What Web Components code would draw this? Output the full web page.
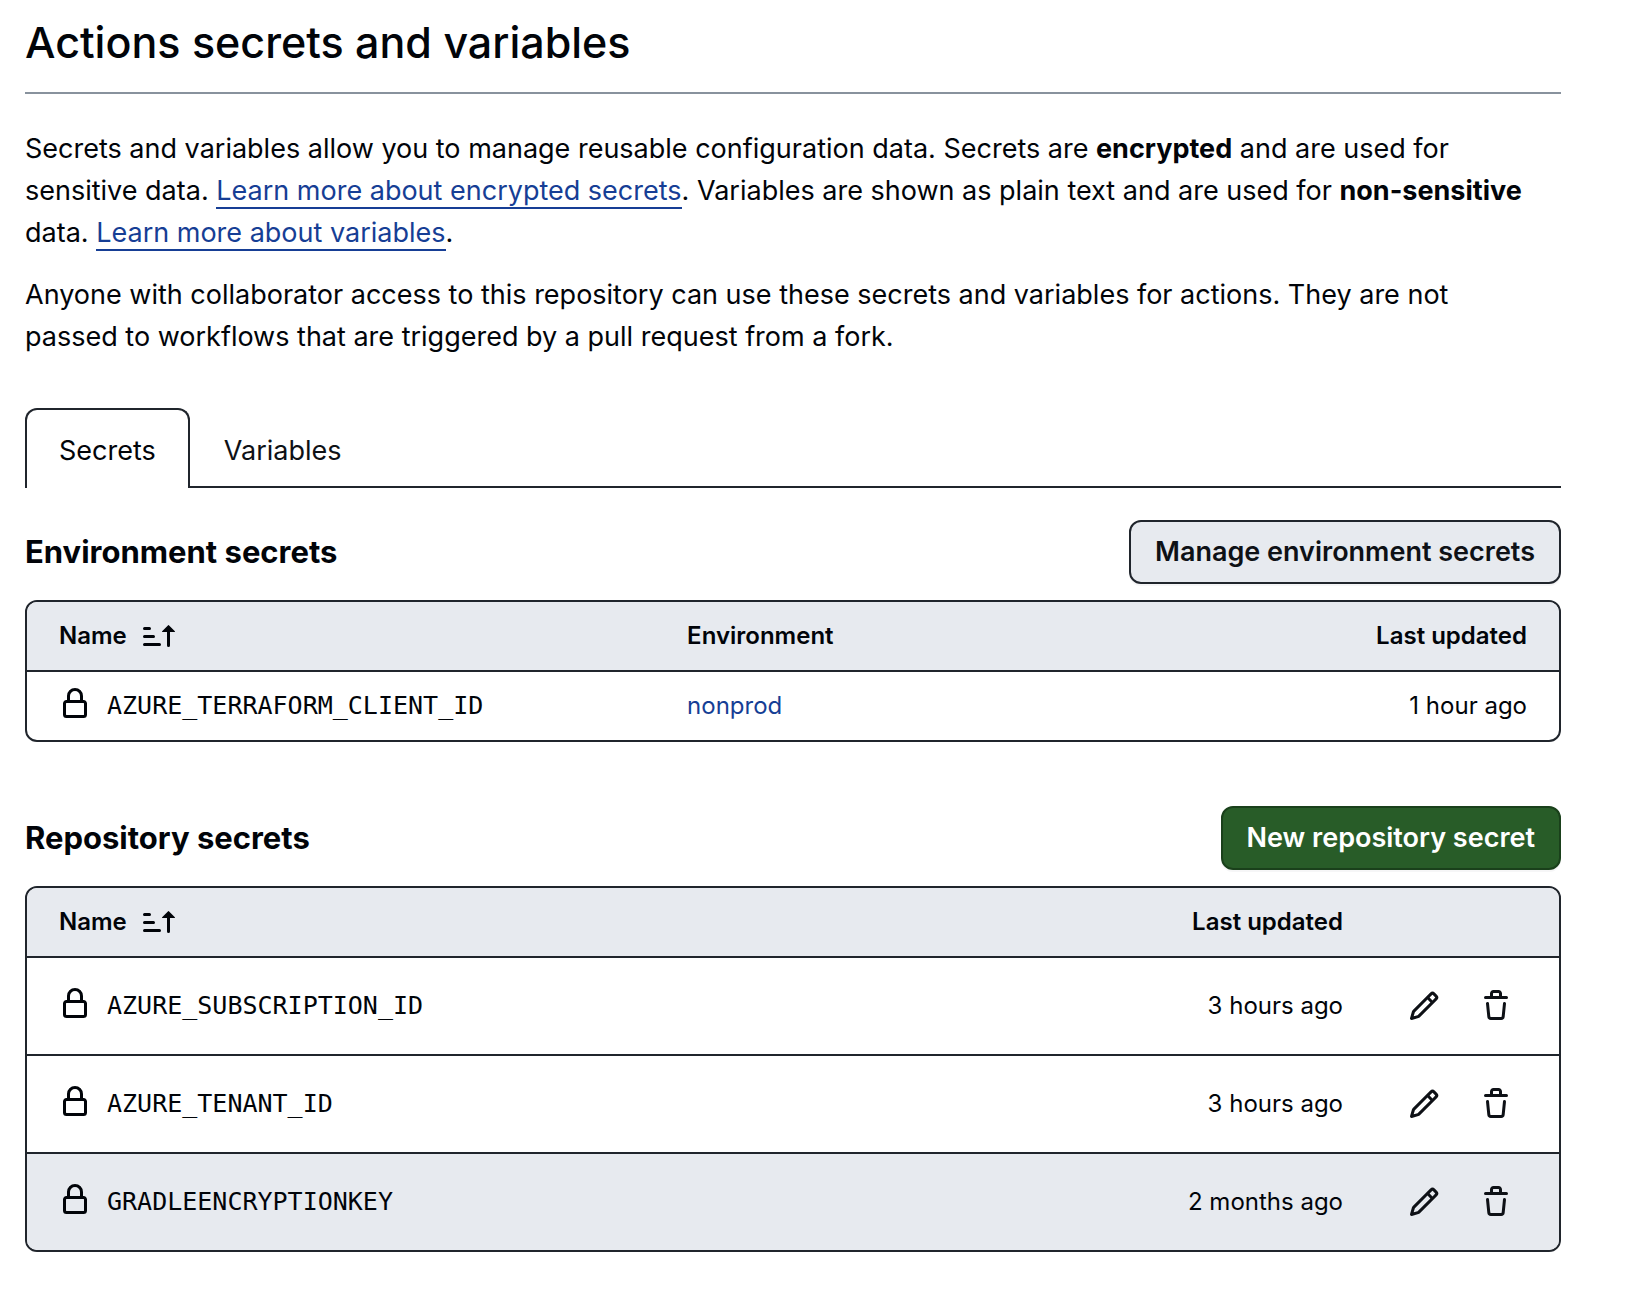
<!DOCTYPE html>
<html lang="en">
<head>
<meta charset="utf-8">
<title>Actions secrets and variables</title>
<style>
  :root {
    --fg: #010409;
    --fg-control: #0e1116;
    --line: #20252c;
    --line-muted: #88929d;
    --subtle: #e7eaef;
    --link: #163e95;
    --green: #285c28;
    --green-line: #1a401b;
    --radius: 12px;
    --mono: "DejaVu Sans Mono", "Liberation Mono", monospace;
  }
  body { margin: 0; background: #fff; color: var(--fg); font: 27px/42px Inter, "Liberation Sans", sans-serif; }
  strong { font-weight: 700; }
</style>
</head>
<body>
<settings-page>
  <page-header>Actions secrets and variables</page-header>
  <page-intro>
    <p>Secrets and variables allow you to manage reusable configuration data. Secrets are <strong>encrypted</strong> and are used for sensitive data. <text-link href="#encrypted" underline>Learn more about encrypted secrets</text-link>. Variables are shown as plain text and are used for <strong>non-sensitive</strong> data. <text-link href="#variables" underline>Learn more about variables</text-link>.</p>
    <p>Anyone with collaborator access to this repository can use these secrets and variables for actions. They are not passed to workflows that are triggered by a pull request from a fork.</p>
  </page-intro>
  <tab-nav></tab-nav>
  <secrets-section heading="Environment secrets" action="Manage environment secrets">
    <environment-table></environment-table>
  </secrets-section>
  <secrets-section heading="Repository secrets" action="New repository secret" variant="primary">
    <repository-table></repository-table>
  </secrets-section>
</settings-page>

<script>
const ICONS = {
  lock: '<path d="M4 4a4 4 0 0 1 8 0v2h.25c.966 0 1.75.784 1.75 1.75v5.5A1.75 1.75 0 0 1 12.25 15h-8.5A1.75 1.75 0 0 1 2 13.25v-5.5C2 6.784 2.784 6 3.75 6H4Zm8.25 3.5h-8.5a.25.25 0 0 0-.25.25v5.5c0 .138.112.25.25.25h8.5a.25.25 0 0 0 .25-.25v-5.5a.25.25 0 0 0-.25-.25ZM10.5 6V4a2.5 2.5 0 1 0-5 0v2Z"/>',
  sort: '<path d="m12.927 2.573 3 3A.25.25 0 0 1 15.75 6H13.5v6.75a.75.75 0 0 1-1.5 0V6H9.75a.25.25 0 0 1-.177-.427l3-3a.25.25 0 0 1 .354 0ZM0 12.25a.75.75 0 0 1 .75-.75h7.5a.75.75 0 0 1 0 1.5H.75a.75.75 0 0 1-.75-.75Zm0-4a.75.75 0 0 1 .75-.75h4.5a.75.75 0 0 1 0 1.5H.75A.75.75 0 0 1 0 8.25Zm0-4a.75.75 0 0 1 .75-.75h2.5a.75.75 0 0 1 0 1.5H.75A.75.75 0 0 1 0 4.25Z"/>',
  pencil: '<path d="M11.013 1.427a1.75 1.75 0 0 1 2.474 0l1.086 1.086a1.75 1.75 0 0 1 0 2.474l-8.61 8.61c-.21.21-.47.364-.756.445l-3.251.93a.75.75 0 0 1-.927-.928l.929-3.25c.081-.286.235-.547.445-.758l8.61-8.61Zm.176 4.823L9.75 4.81l-6.286 6.287a.253.253 0 0 0-.064.108l-.558 1.953 1.953-.558a.253.253 0 0 0 .108-.064Zm1.238-3.763a.25.25 0 0 0-.354 0L10.811 3.75l1.439 1.44 1.263-1.263a.25.25 0 0 0 0-.354Z"/>',
  trash: '<path d="M11 1.75V3h2.25a.75.75 0 0 1 0 1.5H2.75a.75.75 0 0 1 0-1.5H5V1.75C5 .784 5.784 0 6.75 0h2.5C10.216 0 11 .784 11 1.75ZM4.496 6.675l.66 6.6a.25.25 0 0 0 .249.225h5.19a.25.25 0 0 0 .249-.225l.66-6.6a.75.75 0 0 1 1.492.149l-.66 6.6A1.748 1.748 0 0 1 10.595 15h-5.19a1.75 1.75 0 0 1-1.741-1.575l-.66-6.6a.75.75 0 1 1 1.492-.15ZM6.5 1.75V3h3V1.75a.25.25 0 0 0-.25-.25h-2.5a.25.25 0 0 0-.25.25Z"/>'
};

function define(name, render) {
  customElements.define(name, class extends HTMLElement {
    constructor() {
      super();
      this.attachShadow({ mode: "open" });
    }
    connectedCallback() {
      this.shadowRoot.innerHTML = render(this);
    }
  });
}

define("oct-icon", el => `
  <style>
    :host { display: inline-flex; }
    svg { display: block; width: 32px; height: 32px; fill: currentColor; }
  </style>
  <svg viewBox="0 0 16 16" aria-hidden="true">${ICONS[el.getAttribute("name")]}</svg>`);

define("settings-page", () => `
  <style>:host { display: block; padding: 14px 77px 54px 25px; }</style>
  <slot></slot>`);

define("page-header", () => `
  <style>
    :host { display: block; border-bottom: 2px solid var(--line-muted); padding-bottom: 22px; }
    h1 { margin: 0; font-size: 43px; line-height: 56px; font-weight: 500; }
  </style>
  <h1><slot></slot></h1>`);

define("page-intro", () => `
  <style>
    :host { display: block; padding: 34px 24px 0 0; }
    ::slotted(p) { margin: 0 0 20px; }
  </style>
  <slot></slot>`);

define("text-link", el => `
  <style>
    :host { display: inline; }
    a { color: var(--link); text-decoration: none; }
    :host([underline]) a { border-bottom: 2px solid currentColor; }
  </style>
  <a href="${el.getAttribute("href")}"><slot></slot></a>`);

define("tab-nav", () => `
  <style>
    :host { display: block; margin-top: 50px; }
    nav { display: flex; border-bottom: 2px solid var(--line); }
    a { padding: 20px 32px 14px; border: 2px solid transparent; border-bottom: 0; color: var(--fg-control); text-decoration: none; }
    a[aria-current] { margin-bottom: -2px; padding-bottom: 16px; background: #fff; color: var(--fg); border-color: var(--line); border-radius: var(--radius) var(--radius) 0 0; }
  </style>
  <nav aria-label="Secrets and variables">
    <a href="#secrets" aria-current="page">Secrets</a>
    <a href="#variables">Variables</a>
  </nav>`);

define("action-button", () => `
  <style>
    :host { display: block; }
    button { display: block; height: 64px; padding: 0 24px; border: 2px solid var(--line); border-radius: var(--radius); background: var(--subtle); color: var(--fg-control); font: inherit; font-weight: 600; box-shadow: 0 2px 0 #1f23280a; }
    :host([variant="primary"]) button { background: var(--green); border-color: var(--green-line); color: #fff; }
  </style>
  <button type="button"><slot></slot></button>`);

define("secrets-section", el => `
  <style>
    :host { display: block; padding-top: 32px; }
    :host([variant]) { padding-top: 64px; }
    header { display: flex; align-items: center; justify-content: space-between; margin-bottom: 16px; }
    h2 { margin: 0; font-size: 31px; line-height: 48px; font-weight: 700; }
  </style>
  <section>
    <header>
      <h2>${el.getAttribute("heading")}</h2>
      <action-button variant="${el.getAttribute("variant") || "default"}">${el.getAttribute("action")}</action-button>
    </header>
    <slot></slot>
  </section>`);

const TABLE_STYLE = `
  :host { display: block; border: 2px solid var(--line); border-radius: var(--radius); overflow: hidden; font-size: 24px; line-height: 36px; }
  table { width: 100%; border-collapse: separate; border-spacing: 0; table-layout: fixed; }
  th, td { padding: 0 32px; text-align: left; font-weight: 400; }
  th { height: 68px; background: var(--subtle); font-weight: 600; }
  td { border-top: 2px solid var(--line); height: 68px; }
  .time { text-align: right; }
  .label, .name { display: flex; align-items: center; gap: 16px; }
  .name code { font: 25px/36px var(--mono); }
  .name oct-icon { padding-bottom: 4px; }`;

const secretName = name => `<span class="name"><oct-icon name="lock"></oct-icon><code>${name}</code></span>`;
const nameHead = '<th scope="col"><span class="label">Name <oct-icon name="sort"></oct-icon></span></th>';

define("environment-table", () => `
  <style>${TABLE_STYLE}</style>
  <table>
    <colgroup><col style="width:41%"><col><col></colgroup>
    <thead><tr>${nameHead}<th scope="col">Environment</th><th scope="col" class="time">Last updated</th></tr></thead>
    <tbody><tr><td>${secretName("AZURE_TERRAFORM_CLIENT_ID")}</td><td><text-link href="#nonprod">nonprod</text-link></td><td class="time">1 hour ago</td></tr></tbody>
  </table>`);

const SECRETS = [
  ["AZURE_SUBSCRIPTION_ID", "3 hours ago"],
  ["AZURE_TENANT_ID", "3 hours ago"],
  ["GRADLEENCRYPTIONKEY", "2 months ago"]
];

define("repository-table", () => `
  <style>${TABLE_STYLE}
    td { height: 96px; }
    .edit { width: 216px; }
    td.edit, th.edit { padding: 0 27px 0 0; }
    .time { padding-right: 0; }
    .buttons { display: flex; justify-content: flex-end; }
    button { display: flex; align-items: center; justify-content: center; width: 72px; height: 64px; padding: 0; border: 0; background: none; color: var(--fg-control); }
    tbody tr:last-child td { background: var(--subtle); }
  </style>
  <table>
    <colgroup><col><col style="width:300px"><col class="edit"></colgroup>
    <thead><tr>${nameHead}<th scope="col" class="time">Last updated</th><th class="edit"></th></tr></thead>
    <tbody>${SECRETS.map(([name, time]) => `
      <tr><td>${secretName(name)}</td><td class="time">${time}</td><td class="edit"><span class="buttons">
        <button type="button" aria-label="Edit ${name}"><oct-icon name="pencil"></oct-icon></button>
        <button type="button" aria-label="Delete ${name}"><oct-icon name="trash"></oct-icon></button>
      </span></td></tr>`).join("")}
    </tbody>
  </table>`);
</script>
</body>
</html>
